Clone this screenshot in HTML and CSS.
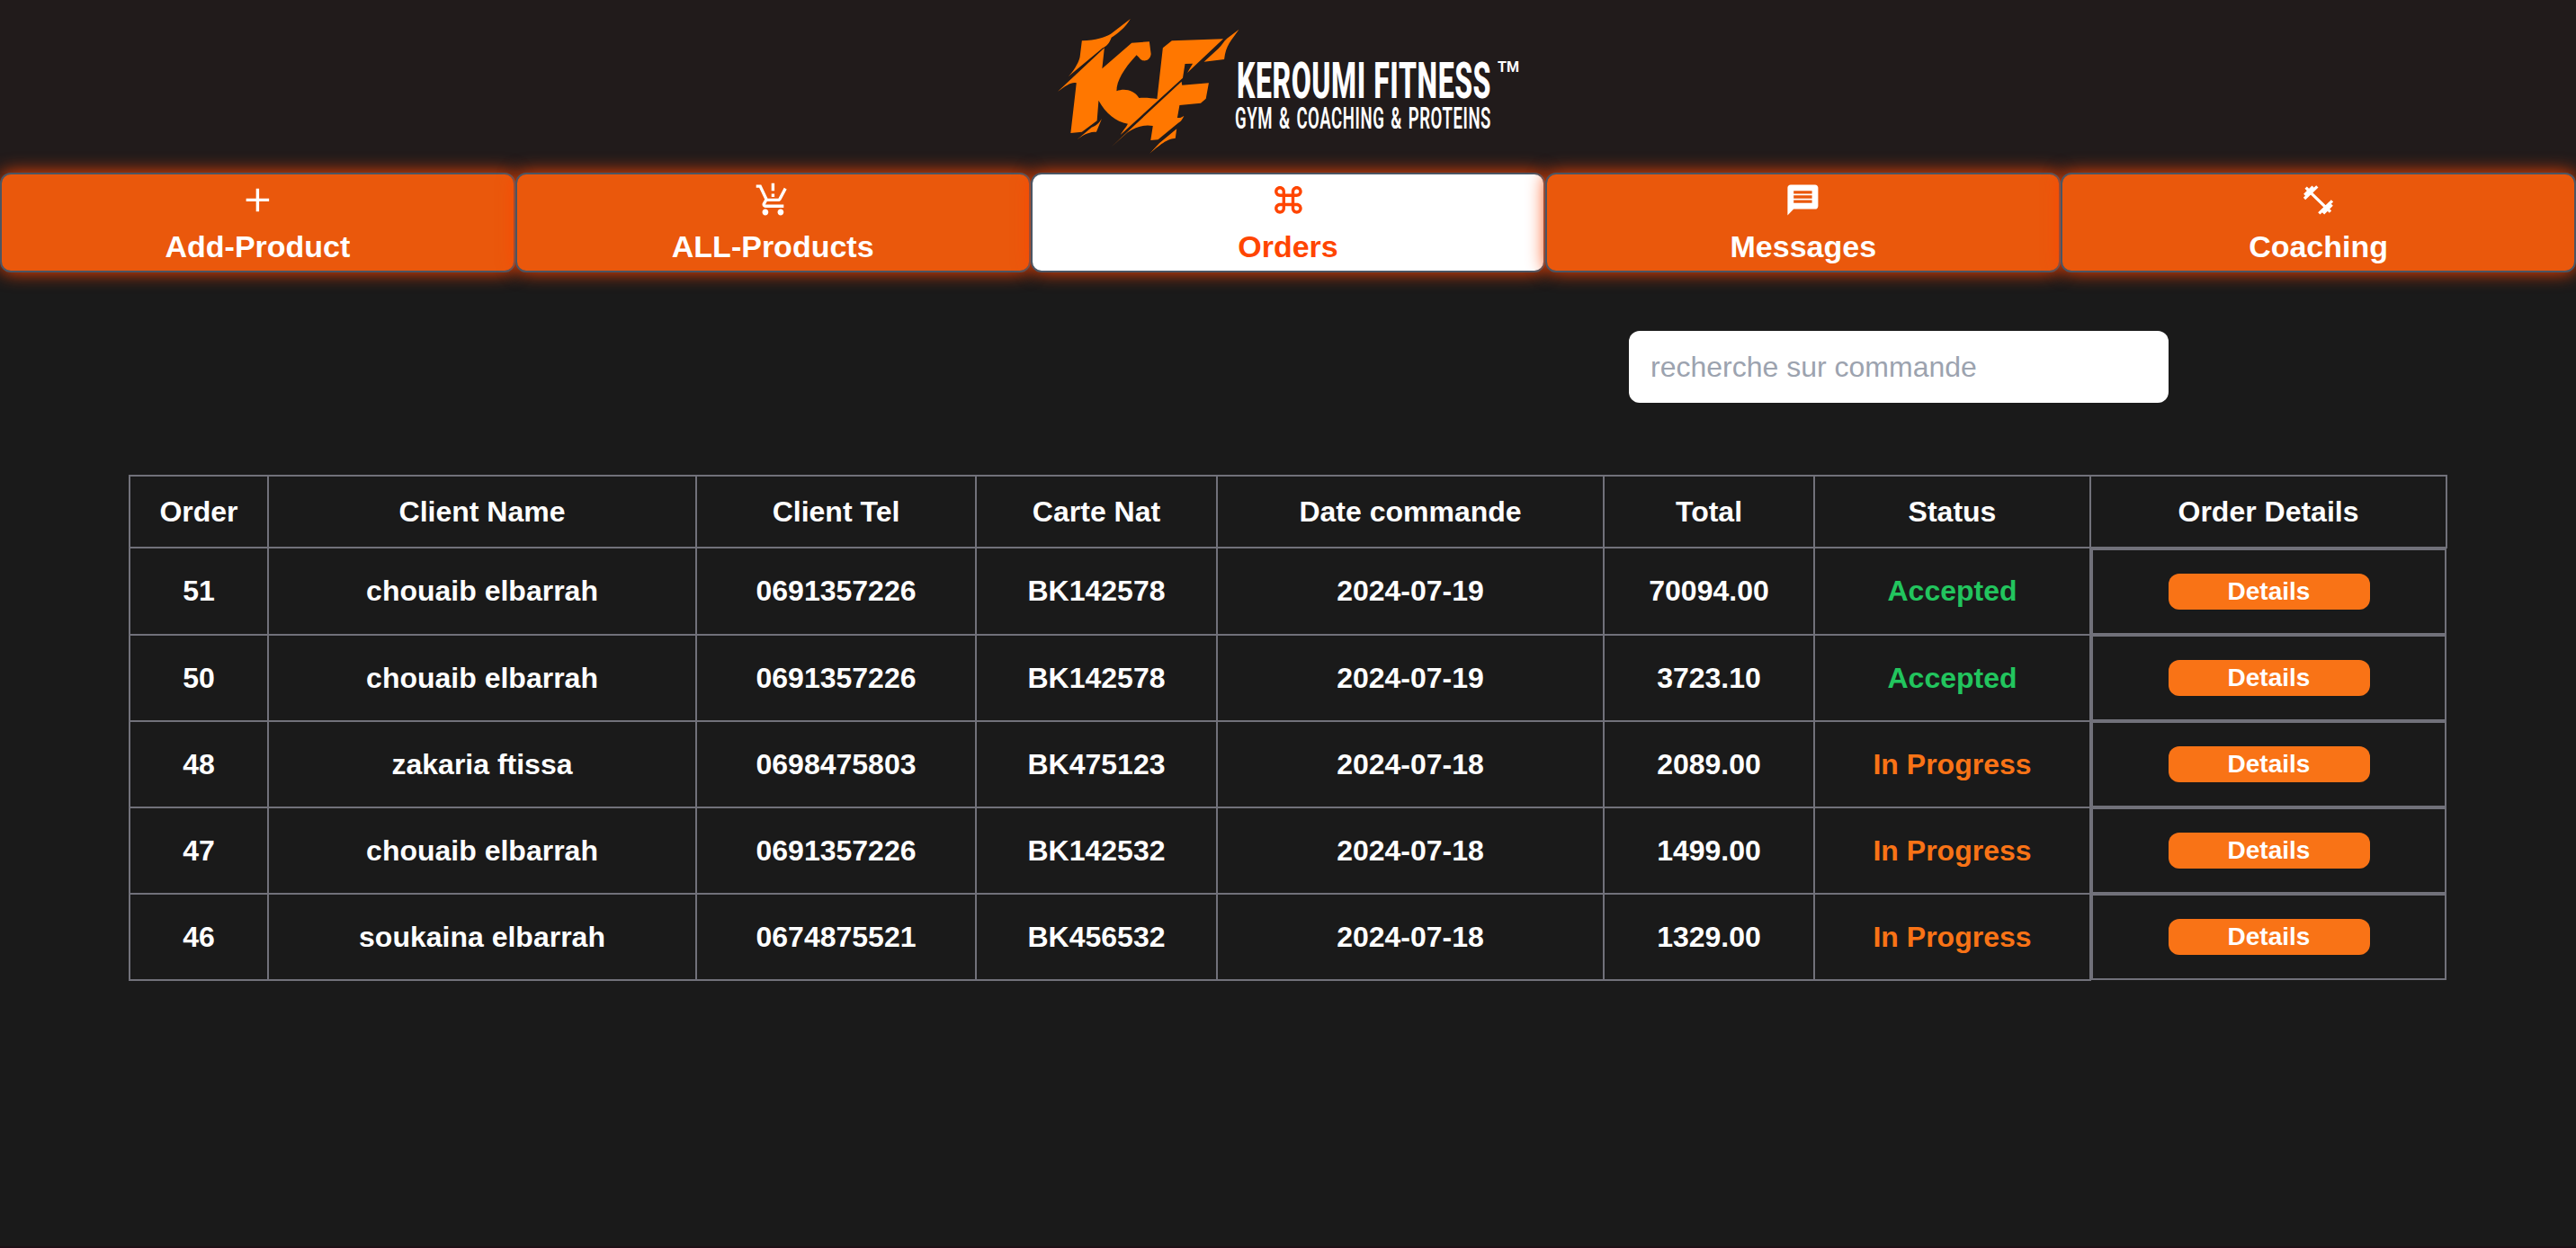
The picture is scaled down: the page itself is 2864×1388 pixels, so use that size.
FILE: index.html
```html
<!DOCTYPE html>
<html lang="fr">
<head>
<meta charset="utf-8">
<title>Keroumi Fitness - Orders</title>
<link rel="stylesheet" href="styles.css">
</head>
<body>
<header class="header">
  <svg class="logo" viewBox="16 0 512 190" role="img" aria-label="Keroumi Fitness">
    <g transform="scale(.35714 .33333)" fill="#ff7700">
      <path d="M120 136C165 134 190 125 210 113L271 63C255 92 232 112 212 125C204 146 198 153 185 160L78 255C100 230 113 200 114 188Z"/>
      <path d="M45 305L190 160L183 229L275 143L330 139L335 180C333 204 308 210 298 192L290 184C250 230 228 270 228 304C252 294 282 300 298 327C318 325 338 328 354 330L372 160L400 136L560 130L448 243L465 212L441 213L434 260L240 450C250 432 258 424 263 413C225 405 195 380 172 335L167 403L120 440L85 444L103 277C88 272 72 285 45 305Z"/>
      <path d="M182 396L165 440C145 440 130 445 105 466L150 425C168 418 176 406 182 396Z"/>
      <path d="M609 98C585 135 568 150 563 198L500 206L545 162C556 152 560 138 572 128Z"/>
      <path d="M212 490L430 272L432 284L515 277L506 329L490 344L424 351L417 393C428 394 434 389 438 386C432 398 430 404 420 410L357 466L334 468L341 420C315 415 288 422 262 442Z"/>
      <path d="M331 512L361 478L415 430L411 461C388 464 372 474 331 512Z"/>
    </g>
    <g class="logo-text">
      <text class="logo-name" x="215" y="109" textLength="283" lengthAdjust="spacingAndGlyphs">KEROUMI FITNESS</text>
      <text class="logo-tag" x="213" y="142.5" textLength="285" lengthAdjust="spacingAndGlyphs">GYM &amp; COACHING &amp; PROTEINS</text>
      <text class="logo-tm" x="505" y="80" textLength="24" lengthAdjust="spacingAndGlyphs">TM</text>
    </g>
  </svg>
</header>

<nav class="nav">
  <a class="tab">
    <svg class="icon" viewBox="0 0 512 512"><path d="M416 277.333H277.333V416h-42.666V277.333H96v-42.666h138.667V96h42.666v138.667H416v42.666z"/></svg>
    <span>Add-Product</span>
  </a>
  <a class="tab">
    <svg class="icon" viewBox="0 0 24 24"><path d="M13 10h-2V8h2v2zm0-4h-2V1h2v5zM7 18c-1.1 0-1.99.9-1.99 2S5.9 22 7 22s2-.9 2-2-.9-2-2-2zm10 0c-1.1 0-1.99.9-1.99 2s.89 2 1.99 2 2-.9 2-2-.9-2-2-2zM8.1 13h7.45c.75 0 1.41-.41 1.75-1.03L21 4.96 19.25 4l-3.7 7H8.53L4.27 2H1v2h2l3.6 7.59-1.35 2.44C4.52 15.37 5.48 17 7 17h12v-2H7l1.1-2z"/></svg>
    <span>ALL-Products</span>
  </a>
  <a class="tab tab-active">
    <svg class="icon" viewBox="0 0 24 24"><path d="M17.5 3C15.57 3 14 4.57 14 6.5V8h-4V6.5C10 4.57 8.43 3 6.5 3S3 4.57 3 6.5 4.57 10 6.5 10H8v4H6.5C4.57 14 3 15.57 3 17.5S4.57 21 6.5 21s3.5-1.57 3.5-3.5V16h4v1.5c0 1.93 1.57 3.5 3.5 3.5s3.5-1.57 3.5-3.5-1.57-3.5-3.5-3.5H16v-4h1.5c1.93 0 3.5-1.57 3.5-3.5S19.43 3 17.5 3zM16 8V6.5c0-.83.67-1.5 1.5-1.5s1.5.67 1.5 1.5S18.33 8 17.5 8H16zM6.5 8C5.67 8 5 7.33 5 6.5S5.67 5 6.5 5 8 5.67 8 6.5V8H6.5zM10 14v-4h4v4h-4zM17.5 19c-.83 0-1.5-.67-1.5-1.5V16h1.5c.83 0 1.5.67 1.5 1.5s-.67 1.5-1.5 1.5zM6.5 19C5.67 19 5 18.33 5 17.5S5.67 16 6.5 16H8v1.5c0 .83-.67 1.5-1.5 1.5z"/></svg>
    <span>Orders</span>
  </a>
  <a class="tab">
    <svg class="icon" viewBox="0 0 24 24"><path d="M20 2H4c-1.1 0-1.99.9-1.99 2L2 22l4-4h14c1.1 0 2-.9 2-2V4c0-1.1-.9-2-2-2zM6 9h12v2H6V9zm12 5H6v-2h12v2zm0-6H6V6h12v2z"/></svg>
    <span>Messages</span>
  </a>
  <a class="tab">
    <svg class="icon" viewBox="23 14 122.4 122.4"><path class="barbell" d="M38 71L81 30M39 59L67 31M43 34L54 45M87 120L131 78M101 120L130 91M125 115L114 104M50 42L118 108"/></svg>
    <span>Coaching</span>
  </a>
</nav>

<main class="main">
  <div class="search-row">
    <input class="search" type="text" placeholder="recherche sur commande">
  </div>

  <table class="orders">
    <colgroup>
      <col class="c-order"><col class="c-name"><col class="c-tel"><col class="c-nat">
      <col class="c-date"><col class="c-total"><col class="c-status"><col class="c-details">
    </colgroup>
    <thead>
      <tr><th>Order</th><th>Client Name</th><th>Client Tel</th><th>Carte Nat</th><th>Date commande</th><th>Total</th><th>Status</th><th>Order Details</th></tr>
    </thead>
    <tbody>
      <tr><td>51</td><td>chouaib elbarrah</td><td>0691357226</td><td>BK142578</td><td>2024-07-19</td><td>70094.00</td><td class="accepted">Accepted</td><td class="details"><div class="details-box"><button class="btn">Details</button></div></td></tr>
      <tr><td>50</td><td>chouaib elbarrah</td><td>0691357226</td><td>BK142578</td><td>2024-07-19</td><td>3723.10</td><td class="accepted">Accepted</td><td class="details"><div class="details-box"><button class="btn">Details</button></div></td></tr>
      <tr><td>48</td><td>zakaria ftissa</td><td>0698475803</td><td>BK475123</td><td>2024-07-18</td><td>2089.00</td><td class="progress">In Progress</td><td class="details"><div class="details-box"><button class="btn">Details</button></div></td></tr>
      <tr><td>47</td><td>chouaib elbarrah</td><td>0691357226</td><td>BK142532</td><td>2024-07-18</td><td>1499.00</td><td class="progress">In Progress</td><td class="details"><div class="details-box"><button class="btn">Details</button></div></td></tr>
      <tr><td>46</td><td>soukaina elbarrah</td><td>0674875521</td><td>BK456532</td><td>2024-07-18</td><td>1329.00</td><td class="progress">In Progress</td><td class="details"><div class="details-box"><button class="btn">Details</button></div></td></tr>
    </tbody>
  </table>
</main>
</body>
</html>
```
FILE: styles.css
```css
* {
  box-sizing: border-box;
}

body {
  margin: 0;
  height: 1388px;
  overflow: hidden;
  display: flex;
  flex-direction: column;
  background: #1a1a1a;
  border-bottom: 2px solid #1c1016;
  color: #fff;
  font-family: "Liberation Sans", Arial, sans-serif;
  font-size: 32px;
}

.header {
  height: 192px;
  flex: none;
  display: flex;
  justify-content: center;
  background: #211b1b;
}

.logo {
  width: 512px;
  height: 190px;
  overflow: visible;
}

.logo-text {
  fill: #fff;
  font-family: Roboto, sans-serif;
}

.logo-name {
  font-size: 56px;
  font-weight: 800;
  letter-spacing: 1px;
}

.logo-tag {
  font-size: 33px;
  font-weight: 600;
  letter-spacing: 1px;
  word-spacing: 3px;
}

.logo-tm {
  font-size: 17px;
  font-weight: 700;
}

.nav {
  flex: none;
  display: grid;
  grid-template-columns: repeat(5, 1fr);
}

.tab {
  position: relative;
  height: 111px;
  padding-top: 8px;
  display: flex;
  flex-direction: column;
  align-items: center;
  gap: 9px;
  border: 2px solid #4b5563;
  border-radius: 12px;
  background: #ea580c;
  box-shadow: 0 0 20px #ff4500;
  font-size: 34px;
  font-weight: 700;
  line-height: 44px;
}

.tab-active {
  background: #fff;
  color: #ff4500;
}

.icon {
  width: 40.8px;
  height: 40.8px;
  flex: none;
  fill: currentColor;
}

.barbell {
  fill: none;
  stroke: currentColor;
  stroke-width: 10;
}

.main {
  flex: 1;
  padding: 65px 143px 0;
}

.search-row {
  display: flex;
  justify-content: flex-end;
  padding-right: 310px;
}

.search {
  width: 600px;
  height: 80px;
  padding: 0 24px;
  border: 0;
  border-radius: 12px;
  background: #fff;
  font: inherit;
}

.search::placeholder {
  color: #9ca3af;
  opacity: 1;
}

.orders {
  width: 2578px;
  margin-top: 80px;
  table-layout: fixed;
  border-collapse: separate;
  border-spacing: 0;
  font-weight: 700;
  text-align: center;
}

.c-order { width: 154px; }
.c-name { width: 476px; }
.c-tel { width: 311px; }
.c-nat { width: 268px; }
.c-date { width: 430px; }
.c-total { width: 234px; }
.c-status { width: 307px; }
.c-details { width: 398px; }

.orders th,
.orders td {
  height: 96px;
  padding: 0;
  border: solid #71717a;
  border-width: 0 0 2px 2px;
}

.orders th {
  height: 82px;
  border-top-width: 2px;
}

.orders th:last-child {
  border-right-width: 2px;
}

.orders tbody tr:first-child td {
  height: 97px;
}

.orders .details {
  border-bottom: 0;
  vertical-align: top;
}

.details-box {
  width: 395px;
  height: 96px;
  display: flex;
  align-items: center;
  justify-content: center;
  border: 2px solid #71717a;
}

tr + tr .details-box {
  margin-top: -1px;
}

.btn {
  width: 224px;
  height: 40px;
  padding: 0;
  border: 0;
  border-radius: 12px;
  background: #f97316;
  color: #fff;
  font: 700 28px/40px "Liberation Sans", Arial, sans-serif;
}

.accepted {
  color: #22c55e;
}

.progress {
  color: #f97316;
}
```
